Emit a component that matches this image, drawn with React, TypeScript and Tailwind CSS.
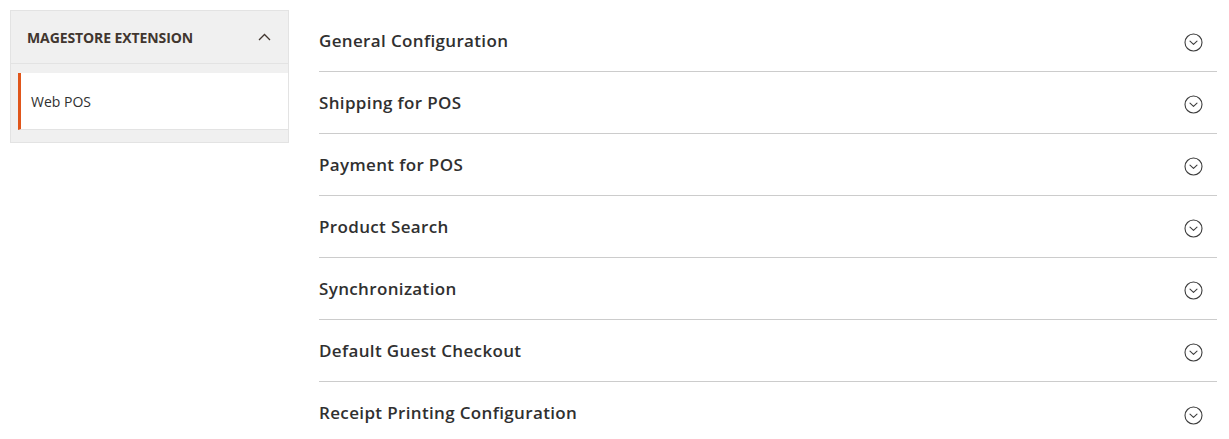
import React from "react";

const sections = [
  "General Configuration",
  "Shipping for POS",
  "Payment for POS",
  "Product Search",
  "Synchronization",
  "Default Guest Checkout",
  "Receipt Printing Configuration",
];

function CircleChevron() {
  return (
    <svg width="19" height="19" viewBox="0 0 19 19" fill="none" className="mt-[4px]">
      <circle cx="9.5" cy="9.5" r="8.5" stroke="#3d3d3d" strokeWidth="1.1" />
      <path d="M6 8.2 L9.5 11.4 L13 8.2" stroke="#3d3d3d" strokeWidth="1.1" strokeLinecap="round" strokeLinejoin="round" />
    </svg>
  );
}

export default function App() {
  return (
    <div className="flex gap-[30px] bg-white pl-[10px] pr-[12px] pt-[10px] h-[439px] overflow-hidden" style={{ fontFamily: '"Open Sans", sans-serif' }}>
      <aside className="w-[279px] shrink-0 self-start border border-[#e3e3e3] bg-[#f0f0f0]">
        <div className="flex h-[53px] items-center justify-between border-b border-[#e3e3e3] pl-[16px] pr-[17px]">
          <span className="text-[14px] font-bold text-[#41362f] tracking-[-0.1px]">MAGESTORE EXTENSION</span>
          <svg width="13" height="8" viewBox="0 0 13 8" fill="none">
            <path d="M1 7 L6.5 1.5 L12 7" stroke="#41362f" strokeWidth="1.3" />
          </svg>
        </div>
        <ul className="pl-[7px] pt-[9px] pb-[12px]">
          <li className="flex h-[57px] items-center border-l-[3px] border-[#e0561b] border-b border-b-[#e3e3e3] bg-white pl-[10px] text-[14px] text-[#303030]">
            Web POS
          </li>
        </ul>
      </aside>
      <main className="flex-1">
        {sections.map((s, i) => (
          <div
            key={s}
            className={
              "flex h-[62px] items-center justify-between pr-[14px] " +
              (i < sections.length - 1 ? "border-b border-[#cccccc]" : "")
            }
          >
            <span className="text-[17px] font-semibold text-[#303030] tracking-[0.35px]">{s}</span>
            <CircleChevron />
          </div>
        ))}
      </main>
    </div>
  );
}
